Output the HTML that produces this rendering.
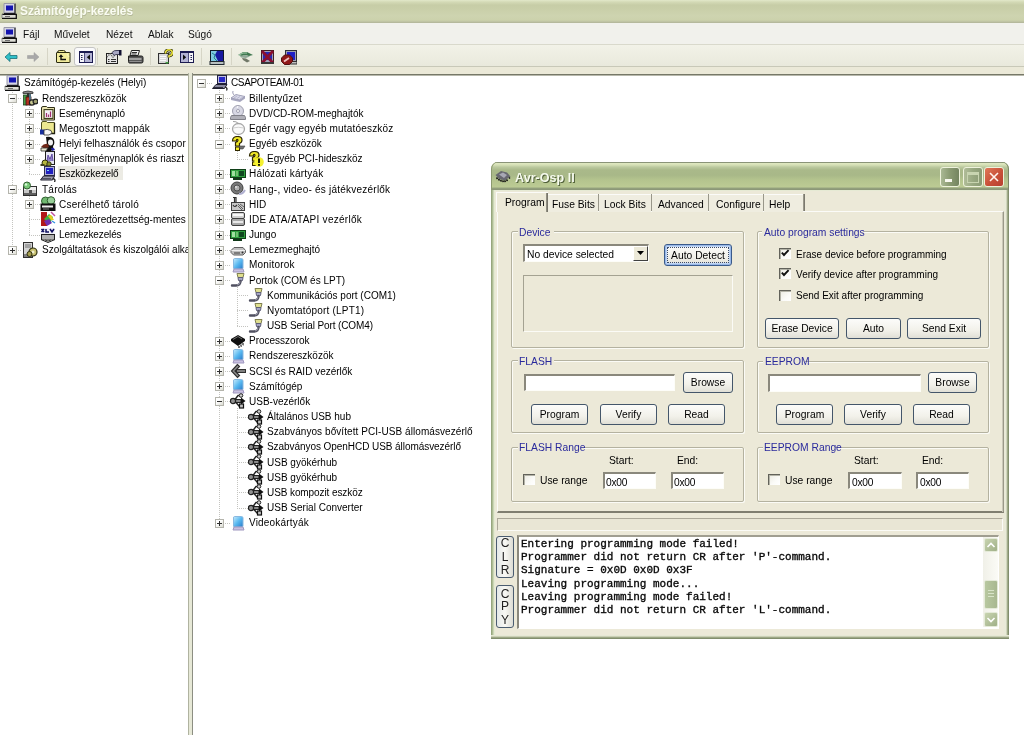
<!DOCTYPE html><html><head><meta charset="utf-8"><style>
html,body{margin:0;padding:0;width:1024px;height:735px;overflow:hidden;background:#fff;position:relative}
.t{position:absolute;white-space:nowrap;line-height:1;will-change:transform}
.exp{position:absolute;width:7px;height:7px;border:1px solid #b4b4ac;background:linear-gradient(135deg,#fff 35%,#dcdcd2)}
.exp .mh{position:absolute;left:1px;top:3px;width:5px;height:1px;background:#303030}
.exp .mv{position:absolute;left:3px;top:1px;width:1px;height:5px;background:#303030}
.hd{position:absolute;height:1px;background:repeating-linear-gradient(90deg,#c4c4c0 0 1px,transparent 1px 2px)}
.vd{position:absolute;width:1px;background:repeating-linear-gradient(#c4c4c0 0 1px,transparent 1px 2px)}
svg{position:absolute}
</style></head><body>
<div style="position:absolute;left:0px;top:0px;width:1024px;height:23px;background:linear-gradient(#e2e8ca 0px,#d4dab6 2px,#c7cda7 5px,#c9cfa9 9px,#ced4b0 16px,#ccd2ac 20px,#bcc0a2 22px,#aeb296 23px)"></div>
<svg style="position:absolute;left:1px;top:3px" width="16" height="16" viewBox="0 0 16 16"><rect x="3" y="0.5" width="11" height="10" fill="#d4d4e4"/><path d="M14 0.5 V10.5 H3" stroke="#202028" stroke-width="1.3" fill="none"/><path d="M3 10 V0.5 H14" stroke="#9898a8" fill="none"/><rect x="5" y="2.5" width="7" height="5" fill="#1414b0"/><path d="M1 11 H15 V15 H1z" fill="#dcdcd4"/><path d="M1 11.3 H15.3 V15.3 H1" stroke="#101010" stroke-width="1.3" fill="none"/><path d="M1 11 V15" stroke="#909090"/><rect x="4" y="13" width="5" height="1" fill="#707070"/></svg>
<div class="t" style="left:20.30px;top:6.13px;font-size:11.9px;color:#fafcf2;font-weight:bold;font-family:'Liberation Sans', sans-serif;text-shadow:0.5px 0.5px 0 #b4b898">Számítógép-kezelés</div>
<div style="position:absolute;left:0px;top:23px;width:1024px;height:21px;background:#f1f1ec"></div>
<div style="position:absolute;left:0px;top:44px;width:1024px;height:1px;background:#d9d9cc"></div>
<svg style="position:absolute;left:1px;top:27px" width="16" height="16" viewBox="0 0 16 16"><rect x="3" y="0.5" width="11" height="10" fill="#d4d4e4"/><path d="M14 0.5 V10.5 H3" stroke="#202028" stroke-width="1.3" fill="none"/><path d="M3 10 V0.5 H14" stroke="#9898a8" fill="none"/><rect x="5" y="2.5" width="7" height="5" fill="#1414b0"/><path d="M1 11 H15 V15 H1z" fill="#dcdcd4"/><path d="M1 11.3 H15.3 V15.3 H1" stroke="#101010" stroke-width="1.3" fill="none"/><path d="M1 11 V15" stroke="#909090"/><rect x="4" y="13" width="5" height="1" fill="#707070"/></svg>
<div class="t" style="left:23.40px;top:30.17px;font-size:10.2px;color:#111;font-weight:normal;font-family:'Liberation Sans', sans-serif;">Fájl</div>
<div class="t" style="left:54.00px;top:30.17px;font-size:10.2px;color:#111;font-weight:normal;font-family:'Liberation Sans', sans-serif;">Művelet</div>
<div class="t" style="left:105.50px;top:30.17px;font-size:10.2px;color:#111;font-weight:normal;font-family:'Liberation Sans', sans-serif;">Nézet</div>
<div class="t" style="left:147.70px;top:30.17px;font-size:10.2px;color:#111;font-weight:normal;font-family:'Liberation Sans', sans-serif;">Ablak</div>
<div class="t" style="left:187.50px;top:30.17px;font-size:10.2px;color:#111;font-weight:normal;font-family:'Liberation Sans', sans-serif;">Súgó</div>
<div style="position:absolute;left:0px;top:45px;width:1024px;height:21px;background:linear-gradient(#f2f2e8,#e9e9dc)"></div>
<div style="position:absolute;left:0px;top:66px;width:1024px;height:1px;background:#c8c8b8"></div>
<div style="position:absolute;left:0px;top:67px;width:1024px;height:7px;background:#ebe9d8"></div>
<div style="position:absolute;left:47px;top:48px;width:1px;height:17px;background:#d6d5c6"></div>
<div style="position:absolute;left:97px;top:48px;width:1px;height:17px;background:#d6d5c6"></div>
<div style="position:absolute;left:150px;top:48px;width:1px;height:17px;background:#d6d5c6"></div>
<div style="position:absolute;left:201px;top:48px;width:1px;height:17px;background:#d6d5c6"></div>
<div style="position:absolute;left:231px;top:48px;width:1px;height:17px;background:#d6d5c6"></div>
<svg style="position:absolute;left:4px;top:51px" width="14" height="12" viewBox="0 0 14 12"><path d="M1 6 L6 1.5 V4.5 H13 V7.5 H6 V10.5 Z" fill="#30c0c8" stroke="#1a7078" stroke-width="0.8"/></svg>
<svg style="position:absolute;left:27px;top:51px" width="13" height="12" viewBox="0 0 13 12"><path d="M12 6 L7 1.5 V4.5 H0.5 V7.5 H7 V10.5 Z" fill="#a8a8a8" stroke="#9a9a9a" stroke-width="0.5"/></svg>
<svg style="position:absolute;left:55px;top:49px" width="16" height="15" viewBox="0 0 16 15"><path d="M2.5 3.5 q0-2 2-2 h4 q2 0 2 2" fill="#f0ea98" stroke="#303010"/><rect x="1.5" y="3.5" width="13.5" height="10" rx="0.5" fill="#f2ec9c" stroke="#2a2a10"/><path d="M12 5 l2 3" stroke="#f8f8c0"/><path d="M6 5.2 L3.6 8 H8.4z" fill="#101010"/><path d="M6 7.5 V10.5 H11" stroke="#101010" stroke-width="1.4" fill="none"/></svg>
<div style="position:absolute;left:74px;top:47px;width:22px;height:19px;background:#fafafc;border:1px solid #c4c4c4;border-radius:3px;box-sizing:border-box"></div>
<svg style="position:absolute;left:79px;top:51px" width="14" height="12" viewBox="0 0 14 12"><rect x="0.5" y="0.5" width="13" height="11" fill="#b4b4d4" stroke="#1a1a50"/><rect x="0" y="0" width="14" height="2" fill="#1a1a50"/><rect x="1" y="2" width="4" height="9" fill="#f4f4f8"/><rect x="5" y="2" width="1" height="9" fill="#505080"/><rect x="2" y="4" width="1.5" height="1" fill="#202050"/><rect x="2" y="6" width="1.5" height="1" fill="#202050"/><rect x="2" y="8" width="1.5" height="1" fill="#202050"/><path d="M11 3.5 V9 L7.8 6.2z" fill="#101010"/></svg>
<svg style="position:absolute;left:105px;top:49px" width="17" height="16" viewBox="0 0 17 16"><rect x="1.5" y="4.5" width="11" height="10" fill="#e4e4e4" stroke="#202020"/><path d="M2 8 L5 5 L8 8 L11 5" stroke="#606060" stroke-width="1.5" stroke-dasharray="1 1" fill="none"/><path d="M3 10.5h1.5M6 10.5h5M3 12.5h1.5M6 12.5h5" stroke="#303030"/><path d="M7 3.5 Q9 1 12 1.5 H15 V5.5 H12 Q10 5.5 9 6.5z" fill="#a8a8c4" stroke="#404058"/><rect x="14" y="1" width="2.5" height="5.5" fill="#101030"/></svg>
<svg style="position:absolute;left:127px;top:49px" width="17" height="16" viewBox="0 0 17 16"><path d="M4.5 1.5 h8 l-1.5 5 h-8z" fill="#f4f4f4" stroke="#202020"/><path d="M5 3.5h5M4.5 5h5" stroke="#303030"/><path d="M1.5 7 h13 q1.5 0 1.5 1.5 v4 q0 1.5-1.5 1.5 h-12 q-1 0-1-1.5z" fill="#585858" stroke="#202020"/><path d="M2 10 h12.5" stroke="#c0c0c0" stroke-width="1.4"/><path d="M2.5 12.5 h12" stroke="#909090"/></svg>
<svg style="position:absolute;left:157px;top:49px" width="16" height="16" viewBox="0 0 16 16"><rect x="1.5" y="4.5" width="10" height="10" fill="#d8d8d8" stroke="#303030"/><path d="M3 7.5h6M3 9.5h6M3 11.5h6" stroke="#f8f8f8" stroke-width="1.2"/><path d="M8 13 l4 0 -2 2z" fill="#40a040"/><path d="M8.5 4.5 Q8.5 0.8 12 0.8 Q15.3 0.8 15.3 3.8 Q15.3 6.5 12 7 V8.5" stroke="#303010" stroke-width="3" fill="none"/><path d="M8.5 4.5 Q8.5 0.8 12 0.8 Q15.3 0.8 15.3 3.8 Q15.3 6.5 12 7 V8.5" stroke="#e8e040" stroke-width="1.6" fill="none"/><circle cx="12" cy="3.8" r="0.9" fill="#303010"/></svg>
<svg style="position:absolute;left:180px;top:51px" width="14" height="12" viewBox="0 0 14 12"><rect x="0.5" y="0.5" width="13" height="11" fill="#b4b4d4" stroke="#1a1a50"/><rect x="0" y="0" width="14" height="2" fill="#1a1a50"/><rect x="9" y="2" width="4" height="9" fill="#f4f4f8"/><rect x="8" y="2" width="1" height="9" fill="#505080"/><rect x="10.5" y="4" width="1.5" height="1" fill="#202050"/><rect x="10.5" y="6" width="1.5" height="1" fill="#202050"/><rect x="10.5" y="8" width="1.5" height="1" fill="#202050"/><path d="M3 3.5 V9 L6.2 6.2z" fill="#101010"/></svg>
<svg style="position:absolute;left:209px;top:49px" width="16" height="16" viewBox="0 0 16 16"><rect x="1.5" y="1.5" width="13" height="11" fill="#1818a0" stroke="#101828"/><path d="M2 2 h6 l-2 4 l3 6 h-7z" fill="#80c8e0"/><path d="M3 4 l3 2 -1 3 3 3" stroke="#208090" fill="none"/><rect x="1" y="12.5" width="14" height="3" fill="#b8c0c0" stroke="#202830"/></svg>
<svg style="position:absolute;left:237px;top:50px" width="17" height="14" viewBox="0 0 17 14"><path d="M1 5 L6 2 H10 L16 5 L12 6 L8 5 L5 6z" fill="#407850"/><path d="M3 6 L8 5 L13 6.5 L9 8 L4 7.5z" fill="#90a898"/><path d="M5 8 L9 8.5 L13 11 L10 12.5 L6 10z" fill="#707868"/><path d="M2 5 L6 3 H10" stroke="#a8d0b0" fill="none"/></svg>
<svg style="position:absolute;left:260px;top:49px" width="15" height="16" viewBox="0 0 15 16"><rect x="1.5" y="1.5" width="12" height="12" fill="#a0a0b8" stroke="#402020"/><rect x="3" y="3" width="9" height="8" fill="#2828b0"/><path d="M2 2 L13 14 M13 2 L2 14" stroke="#8a1030" stroke-width="2.6"/><rect x="1" y="13" width="13" height="2" fill="#383838"/></svg>
<svg style="position:absolute;left:281px;top:49px" width="16" height="16" viewBox="0 0 16 16"><rect x="4.5" y="1.5" width="11" height="11" fill="#a0a0b0" stroke="#303038"/><rect x="6" y="3" width="8" height="8" fill="#2020c8"/><rect x="4" y="12.5" width="12" height="2.5" fill="#c0c0c0" stroke="#303030"/><path d="M3.5 6 h5 l3 3 v3.5 l-3 3 h-5 l-3-3 v-3.5z" fill="#901818" stroke="#501010"/><path d="M3 12.5 L8 9" stroke="#f0c0c0" stroke-width="1.8"/></svg>
<div style="position:absolute;left:0px;top:74px;width:188px;height:1px;background:#767868"></div>
<div style="position:absolute;left:0px;top:75px;width:188px;height:1px;background:#b8b9ac"></div>
<div style="position:absolute;left:188px;top:73px;width:1px;height:662px;background:#b0b3a0"></div>
<div style="position:absolute;left:189px;top:73px;width:3px;height:662px;background:#e6e8d6"></div>
<div style="position:absolute;left:192px;top:73px;width:1px;height:662px;background:#8c8e82"></div>
<div style="position:absolute;left:193px;top:74px;width:831px;height:1px;background:#767868"></div>
<div style="position:absolute;left:193px;top:75px;width:831px;height:1px;background:#b8b9ac"></div>
<div style="position:absolute;left:58px;top:166px;width:65px;height:14px;background:#ecebe4"></div>
<div style="position:absolute;left:0px;top:74px;width:188px;height:661px;overflow:hidden">
<div class="hd" style="left:12px;top:24px;width:10px"></div>
<div class="vd" style="left:12px;top:16px;height:8px"></div>
<div class="hd" style="left:29px;top:39px;width:11px"></div>
<div class="vd" style="left:29px;top:31px;height:8px"></div>
<div class="hd" style="left:29px;top:54px;width:11px"></div>
<div class="vd" style="left:29px;top:31px;height:23px"></div>
<div class="hd" style="left:29px;top:70px;width:11px"></div>
<div class="vd" style="left:29px;top:31px;height:39px"></div>
<div class="hd" style="left:29px;top:85px;width:11px"></div>
<div class="vd" style="left:29px;top:31px;height:54px"></div>
<div class="hd" style="left:29px;top:100px;width:11px"></div>
<div class="vd" style="left:29px;top:31px;height:69px"></div>
<div class="hd" style="left:12px;top:115px;width:10px"></div>
<div class="vd" style="left:12px;top:16px;height:99px"></div>
<div class="hd" style="left:29px;top:130px;width:11px"></div>
<div class="vd" style="left:29px;top:122px;height:8px"></div>
<div class="hd" style="left:29px;top:145px;width:11px"></div>
<div class="vd" style="left:29px;top:122px;height:23px"></div>
<div class="hd" style="left:29px;top:161px;width:11px"></div>
<div class="vd" style="left:29px;top:122px;height:39px"></div>
<div class="hd" style="left:12px;top:176px;width:10px"></div>
<div class="vd" style="left:12px;top:16px;height:160px"></div>
<svg style="position:absolute;left:4px;top:1px" width="16" height="16" viewBox="0 0 16 16"><rect x="3" y="0.5" width="11" height="10" fill="#d4d4e4"/><path d="M14 0.5 V10.5 H3" stroke="#202028" stroke-width="1.3" fill="none"/><path d="M3 10 V0.5 H14" stroke="#9898a8" fill="none"/><rect x="5" y="2.5" width="7" height="5" fill="#1414b0"/><path d="M1 11 H15 V15 H1z" fill="#dcdcd4"/><path d="M1 11.3 H15.3 V15.3 H1" stroke="#101010" stroke-width="1.3" fill="none"/><path d="M1 11 V15" stroke="#909090"/><rect x="4" y="13" width="5" height="1" fill="#707070"/></svg>
<div class="t" style="left:23.50px;top:4.33px;font-size:10px;color:#000;font-weight:normal;font-family:'Liberation Sans', sans-serif;">Számítógép-kezelés (Helyi)</div>
<div class="exp" style="left:8px;top:20px"><div class="mh"></div></div>
<svg style="position:absolute;left:22px;top:16px" width="16" height="16" viewBox="0 0 16 16"><path d="M1 2 Q6 0 11 2 V3.5 H1z" fill="#8a8a8a" stroke="#303030" stroke-width="0.8"/><rect x="5" y="3" width="2" height="6" fill="#303030"/><rect x="1.5" y="5" width="3.5" height="10" fill="#48a048" stroke="#204020" stroke-width="0.8"/><rect x="4" y="7" width="5" height="8" fill="#b83020" stroke="#401010" stroke-width="0.8"/><rect x="7" y="4" width="2" height="6" fill="#507080"/><circle cx="10" cy="12.5" r="2.6" fill="#c8c890" stroke="#202020" stroke-width="1.2"/><circle cx="13.5" cy="11.5" r="2.4" fill="#a0a070" stroke="#202020" stroke-width="1.2"/></svg>
<div class="t" style="left:41.50px;top:19.50px;font-size:10px;color:#000;font-weight:normal;font-family:'Liberation Sans', sans-serif;">Rendszereszközök</div>
<div class="exp" style="left:25px;top:35px"><div class="mh"></div><div class="mv"></div></div>
<svg style="position:absolute;left:40px;top:31px" width="16" height="16" viewBox="0 0 16 16"><path d="M1.5 3 Q1.5 1.5 3 1.5 H6.5 L7.5 2.5 H14.5 V15 H1.5z" fill="#e8e2b0" stroke="#303018"/><rect x="4" y="4.5" width="9" height="9" fill="#c8c0a0" stroke="#404020"/><rect x="5" y="5.5" width="7" height="7" fill="#f4f0f8"/><path d="M6.5 12 V8 M8.5 12 V9.5 M10.5 12 V6.5" stroke="#a03070" stroke-width="1.2"/></svg>
<div class="t" style="left:59.20px;top:34.67px;font-size:10px;color:#000;font-weight:normal;font-family:'Liberation Sans', sans-serif;">Eseménynapló</div>
<div class="exp" style="left:25px;top:50px"><div class="mh"></div><div class="mv"></div></div>
<svg style="position:absolute;left:40px;top:46px" width="16" height="16" viewBox="0 0 16 16"><path d="M1.5 3 Q1.5 1.5 3 1.5 H6.5 L7.5 2.5 H14.5 V13.5 H1.5z" fill="#ece890" stroke="#505020"/><path d="M14.5 3 V13.5 H3" stroke="#202010" stroke-width="1.3" fill="none"/><rect x="0" y="9.5" width="4.5" height="5" fill="#1830a0"/><path d="M4 10 Q7 8.5 11 10.5 L12 13 L9 15 H4z" fill="#f8f8f8" stroke="#303030" stroke-width="0.8"/></svg>
<div class="t" style="left:59.20px;top:49.84px;font-size:10px;color:#000;font-weight:normal;font-family:'Liberation Sans', sans-serif;letter-spacing:0.219px">Megosztott mappák</div>
<div class="exp" style="left:25px;top:66px"><div class="mh"></div><div class="mv"></div></div>
<svg style="position:absolute;left:40px;top:62px" width="16" height="16" viewBox="0 0 16 16"><path d="M6 1 Q12 0 14 4 Q15 8 13 10 Q14 13 11 15 H5 Q8 12 7 9z" fill="#101010"/><ellipse cx="10.5" cy="6.5" rx="2.5" ry="3" fill="#f0f0f0"/><path d="M1 11 Q4 7 8 8 L9 11 L6 13z" fill="#702818"/><path d="M1 12 L8 12 L6 15 H1z" fill="#e8e8d0" stroke="#303030" stroke-width="0.8"/><path d="M11 12 Q14 11 15 14 L12 15z" fill="#2020a0"/></svg>
<div class="t" style="left:59.20px;top:65.01px;font-size:10px;color:#000;font-weight:normal;font-family:'Liberation Sans', sans-serif;">Helyi felhasználók és csopor</div>
<div class="exp" style="left:25px;top:81px"><div class="mh"></div><div class="mv"></div></div>
<svg style="position:absolute;left:40px;top:77px" width="16" height="16" viewBox="0 0 16 16"><rect x="5.5" y="0.5" width="9" height="13" fill="#e8e8f4" stroke="#202020"/><path d="M7 10 L8 4 L10 8 L12 3 L13 10" fill="#9080c8" stroke="#503898" stroke-width="0.8"/><circle cx="5" cy="12" r="3" fill="#b8b840" stroke="#303010"/><circle cx="9" cy="13" r="2.2" fill="#889030" stroke="#303010"/><rect x="0.5" y="13" width="4" height="2" fill="#404020"/></svg>
<div class="t" style="left:59.20px;top:80.18px;font-size:10px;color:#000;font-weight:normal;font-family:'Liberation Sans', sans-serif;">Teljesítménynaplók és riaszt</div>
<svg style="position:absolute;left:40px;top:92px" width="16" height="16" viewBox="0 0 16 16"><rect x="4.5" y="0.5" width="10" height="9" fill="#b0b0d8" stroke="#303050"/><rect x="6" y="2" width="7" height="6" fill="#2020c0"/><rect x="7" y="4" width="2" height="1" fill="#80d0f0"/><path d="M0.5 14 L3.5 10 H14.5 L12.5 14 Z" fill="#9898a8" stroke="#202030"/><path d="M2 12.5 h9" stroke="#505060"/><path d="M12.5 12.5 q3.5 0.5 2 3.5" stroke="#202020" stroke-width="1.3" fill="none"/></svg>
<div class="t" style="left:59.20px;top:95.35px;font-size:10px;color:#000;font-weight:normal;font-family:'Liberation Sans', sans-serif;letter-spacing:-0.145px">Eszközkezelő</div>
<div class="exp" style="left:8px;top:111px"><div class="mh"></div></div>
<svg style="position:absolute;left:22px;top:107px" width="16" height="16" viewBox="0 0 16 16"><rect x="1.5" y="5.5" width="13" height="9" fill="#c8c8c8" stroke="#303030"/><rect x="2" y="6" width="12" height="3" fill="#f0f0f0"/><rect x="2" y="12" width="12" height="2" fill="#606060"/><rect x="7" y="9" width="3" height="3" fill="#505050"/><circle cx="5" cy="4.5" r="3.5" fill="#78c878" stroke="#306030"/><circle cx="4" cy="3.5" r="1.2" fill="#d8f8d8"/></svg>
<div class="t" style="left:41.50px;top:110.53px;font-size:10px;color:#000;font-weight:normal;font-family:'Liberation Sans', sans-serif;letter-spacing:0.233px">Tárolás</div>
<div class="exp" style="left:25px;top:126px"><div class="mh"></div><div class="mv"></div></div>
<svg style="position:absolute;left:40px;top:122px" width="16" height="16" viewBox="0 0 16 16"><circle cx="5.5" cy="5" r="4" fill="#70b870" stroke="#306030"/><circle cx="11" cy="4.5" r="3.8" fill="#98d098" stroke="#306030"/><rect x="0.5" y="7.5" width="15" height="7.5" fill="#101010"/><rect x="2" y="9.5" width="11" height="2" fill="#f0f0f0"/><rect x="3" y="12.5" width="6" height="1" fill="#808080"/></svg>
<div class="t" style="left:59.20px;top:125.69px;font-size:10px;color:#000;font-weight:normal;font-family:'Liberation Sans', sans-serif;letter-spacing:0.225px">Cserélhető tároló</div>
<svg style="position:absolute;left:40px;top:137px" width="16" height="16" viewBox="0 0 16 16"><rect x="1" y="1" width="6" height="14" fill="#b01818"/><path d="M4 8 L9 3 L13 6 L10 13z" fill="#40b040"/><path d="M4 10 L9 8 L12 12 L7 15z" fill="#7030b0"/><path d="M8 5 L11 4 L14 9 L11 9z" fill="#e8d020"/><path d="M11 1 L15 5" stroke="#c050a0" stroke-width="1.4"/><path d="M12 10 L15 12" stroke="#3090e0" stroke-width="1.4"/></svg>
<div class="t" style="left:59.20px;top:140.86px;font-size:10px;color:#000;font-weight:normal;font-family:'Liberation Sans', sans-serif;">Lemeztöredezettség-mentes</div>
<svg style="position:absolute;left:40px;top:153px" width="16" height="16" viewBox="0 0 16 16"><path d="M1 1 h14 v6 h-14z" fill="#f0f0f8"/><path d="M1.5 2 L4 5 M4 2 L1.5 5 M6 2 v3 h3 M10 2 L12 5 L14 2" stroke="#101060" stroke-width="1.5" fill="none"/><rect x="1.5" y="7.5" width="13" height="5" fill="#b0b0b0" stroke="#202020"/><path d="M1 12.5 L8 15.5 L15 12.5" fill="#e0e0d8" stroke="#202020"/><path d="M5 13 L8 14 L11 13" stroke="#404040" fill="none"/></svg>
<div class="t" style="left:59.20px;top:156.03px;font-size:10px;color:#000;font-weight:normal;font-family:'Liberation Sans', sans-serif;letter-spacing:-0.118px">Lemezkezelés</div>
<div class="exp" style="left:8px;top:172px"><div class="mh"></div><div class="mv"></div></div>
<svg style="position:absolute;left:22px;top:168px" width="16" height="16" viewBox="0 0 16 16"><rect x="1.5" y="0.5" width="9" height="15" fill="#d4d4d4" stroke="#303030"/><path d="M3 3h6M3 5h6" stroke="#707070"/><rect x="2" y="12" width="8" height="3" fill="#808080"/><circle cx="11" cy="10" r="4" fill="#c8c070" stroke="#303010" stroke-width="1.2"/><circle cx="11" cy="10" r="1.5" fill="#f0f0d0"/><circle cx="7.5" cy="12" r="2.5" fill="#a8a050" stroke="#303010"/></svg>
<div class="t" style="left:41.50px;top:171.21px;font-size:10px;color:#000;font-weight:normal;font-family:'Liberation Sans', sans-serif;">Szolgáltatások és kiszolgálói alka</div>
</div>
<div style="position:absolute;left:193px;top:74px;width:831px;height:661px;overflow:hidden">
<div class="hd" style="left:8px;top:9px;width:11px"></div>
<div class="hd" style="left:26px;top:24px;width:11px"></div>
<div class="vd" style="left:26px;top:16px;height:8px"></div>
<div class="hd" style="left:26px;top:39px;width:11px"></div>
<div class="vd" style="left:26px;top:16px;height:23px"></div>
<div class="hd" style="left:26px;top:54px;width:11px"></div>
<div class="vd" style="left:26px;top:16px;height:38px"></div>
<div class="hd" style="left:26px;top:70px;width:11px"></div>
<div class="vd" style="left:26px;top:16px;height:54px"></div>
<div class="hd" style="left:44px;top:85px;width:11px"></div>
<div class="vd" style="left:44px;top:77px;height:8px"></div>
<div class="hd" style="left:26px;top:100px;width:11px"></div>
<div class="vd" style="left:26px;top:16px;height:84px"></div>
<div class="hd" style="left:26px;top:115px;width:11px"></div>
<div class="vd" style="left:26px;top:16px;height:99px"></div>
<div class="hd" style="left:26px;top:130px;width:11px"></div>
<div class="vd" style="left:26px;top:16px;height:114px"></div>
<div class="hd" style="left:26px;top:145px;width:11px"></div>
<div class="vd" style="left:26px;top:16px;height:129px"></div>
<div class="hd" style="left:26px;top:161px;width:11px"></div>
<div class="vd" style="left:26px;top:16px;height:145px"></div>
<div class="hd" style="left:26px;top:176px;width:11px"></div>
<div class="vd" style="left:26px;top:16px;height:160px"></div>
<div class="hd" style="left:26px;top:191px;width:11px"></div>
<div class="vd" style="left:26px;top:16px;height:175px"></div>
<div class="hd" style="left:26px;top:206px;width:11px"></div>
<div class="vd" style="left:26px;top:16px;height:190px"></div>
<div class="hd" style="left:44px;top:221px;width:11px"></div>
<div class="vd" style="left:44px;top:213px;height:8px"></div>
<div class="hd" style="left:44px;top:236px;width:11px"></div>
<div class="vd" style="left:44px;top:213px;height:23px"></div>
<div class="hd" style="left:44px;top:252px;width:11px"></div>
<div class="vd" style="left:44px;top:213px;height:39px"></div>
<div class="hd" style="left:26px;top:267px;width:11px"></div>
<div class="vd" style="left:26px;top:16px;height:251px"></div>
<div class="hd" style="left:26px;top:282px;width:11px"></div>
<div class="vd" style="left:26px;top:16px;height:266px"></div>
<div class="hd" style="left:26px;top:297px;width:11px"></div>
<div class="vd" style="left:26px;top:16px;height:281px"></div>
<div class="hd" style="left:26px;top:312px;width:11px"></div>
<div class="vd" style="left:26px;top:16px;height:296px"></div>
<div class="hd" style="left:26px;top:327px;width:11px"></div>
<div class="vd" style="left:26px;top:16px;height:311px"></div>
<div class="hd" style="left:44px;top:343px;width:11px"></div>
<div class="vd" style="left:44px;top:334px;height:9px"></div>
<div class="hd" style="left:44px;top:358px;width:11px"></div>
<div class="vd" style="left:44px;top:334px;height:24px"></div>
<div class="hd" style="left:44px;top:373px;width:11px"></div>
<div class="vd" style="left:44px;top:334px;height:39px"></div>
<div class="hd" style="left:44px;top:388px;width:11px"></div>
<div class="vd" style="left:44px;top:334px;height:54px"></div>
<div class="hd" style="left:44px;top:403px;width:11px"></div>
<div class="vd" style="left:44px;top:334px;height:69px"></div>
<div class="hd" style="left:44px;top:418px;width:11px"></div>
<div class="vd" style="left:44px;top:334px;height:84px"></div>
<div class="hd" style="left:44px;top:434px;width:11px"></div>
<div class="vd" style="left:44px;top:334px;height:100px"></div>
<div class="hd" style="left:26px;top:449px;width:11px"></div>
<div class="vd" style="left:26px;top:16px;height:433px"></div>
<div class="exp" style="left:4px;top:5px"><div class="mh"></div></div>
<svg style="position:absolute;left:19px;top:1px" width="16" height="16" viewBox="0 0 16 16"><rect x="5.5" y="0.5" width="9" height="8" fill="#c0c0e0" stroke="#202040"/><rect x="7" y="2" width="6" height="5" fill="#2828c8"/><path d="M0.5 13.5 L4 9.5 H15 L12.5 13.5 Z" fill="#8a8aa0" stroke="#202030"/><path d="M2 12.5 h9" stroke="#303040"/><path d="M13 12 q3 1 1.5 3.5" stroke="#202020" stroke-width="1.3" fill="none"/></svg>
<div class="t" style="left:38.00px;top:4.33px;font-size:10px;color:#000;font-weight:normal;font-family:'Liberation Sans', sans-serif;letter-spacing:-0.382px">CSAPOTEAM-01</div>
<div class="exp" style="left:22px;top:20px"><div class="mh"></div><div class="mv"></div></div>
<svg style="position:absolute;left:37px;top:16px" width="16" height="16" viewBox="0 0 16 16"><path d="M1 8 L6 4.5 L15 6.5 L15 8.5 L10 12 L1 10z" fill="#a8a8c0"/><path d="M1 8 L6 4.5 L15 6.5 L10 10z" fill="#d8d8e8" stroke="#9898b0" stroke-width="0.8"/><path d="M4 8 L7 6 M7 8.5 L10 6.5 M10 9 L13 7" stroke="#b8b8d0"/><path d="M4 5 Q2 3 3 1" stroke="#a0a0b8" fill="none"/></svg>
<div class="t" style="left:56.00px;top:19.50px;font-size:10px;color:#000;font-weight:normal;font-family:'Liberation Sans', sans-serif;letter-spacing:0.155px">Billentyűzet</div>
<div class="exp" style="left:22px;top:35px"><div class="mh"></div><div class="mv"></div></div>
<svg style="position:absolute;left:37px;top:31px" width="16" height="16" viewBox="0 0 16 16"><circle cx="8" cy="6" r="5.5" fill="#d8d8e4" stroke="#a0a0b0"/><circle cx="8" cy="6" r="1.5" fill="#fff" stroke="#a0a0b0"/><path d="M7 3 l1-2" stroke="#fff"/><path d="M1.5 10.5 h13 l1 2 v2 h-15 v-2z" fill="#b0b0b8" stroke="#808088"/></svg>
<div class="t" style="left:56.00px;top:34.67px;font-size:10px;color:#000;font-weight:normal;font-family:'Liberation Sans', sans-serif;">DVD/CD-ROM-meghajtók</div>
<div class="exp" style="left:22px;top:50px"><div class="mh"></div><div class="mv"></div></div>
<svg style="position:absolute;left:37px;top:46px" width="16" height="16" viewBox="0 0 16 16"><ellipse cx="8.5" cy="9" rx="6" ry="5.5" fill="#fafafa" stroke="#a8a8a8" stroke-width="1.3"/><path d="M3 8 Q8 6.5 14 8" stroke="#d0d0d0" fill="none"/><path d="M8.5 3.5 Q6 1 3 1.5" stroke="#a0a0a0" fill="none"/></svg>
<div class="t" style="left:56.00px;top:49.84px;font-size:10px;color:#000;font-weight:normal;font-family:'Liberation Sans', sans-serif;letter-spacing:0.174px">Egér vagy egyéb mutatóeszköz</div>
<div class="exp" style="left:22px;top:66px"><div class="mh"></div></div>
<svg style="position:absolute;left:37px;top:62px" width="16" height="16" viewBox="0 0 16 16"><path d="M2.5 5 Q2.5 0.5 7.5 0.5 Q12 0.5 12 4 Q12 6.5 9.5 7.5 V10 H5.5 V6.5 Q8 5.8 8 4.3 Q8 3.3 7.2 3.3 Q6.3 3.3 6.3 5z" fill="#f0e828" stroke="#302800" stroke-width="1.2"/><rect x="5.5" y="11" width="4" height="3.5" fill="#f0e828" stroke="#302800"/><path d="M9 10 L15 10 L13 13 H10z" fill="#707070" stroke="#404040" stroke-width="0.6"/></svg>
<div class="t" style="left:56.00px;top:65.01px;font-size:10px;color:#000;font-weight:normal;font-family:'Liberation Sans', sans-serif;">Egyéb eszközök</div>
<svg style="position:absolute;left:55px;top:77px" width="16" height="16" viewBox="0 0 16 16"><path d="M1.5 5 Q1.5 0.5 6.5 0.5 Q11 0.5 11 4 Q11 6.5 8.5 7.5 V10 H4.5 V6.5 Q7 5.8 7 4.3 Q7 3.3 6.2 3.3 Q5.3 3.3 5.3 5z" fill="#f0e828" stroke="#302800" stroke-width="1.2"/><rect x="4.5" y="11" width="4" height="3.5" fill="#f0e828" stroke="#302800"/><circle cx="11" cy="11" r="4.8" fill="#f4f030"/><rect x="10" y="7.5" width="2" height="4.5" fill="#202000"/><rect x="10" y="13" width="2" height="1.8" fill="#202000"/></svg>
<div class="t" style="left:74.00px;top:80.18px;font-size:10px;color:#000;font-weight:normal;font-family:'Liberation Sans', sans-serif;">Egyéb PCI-hideszköz</div>
<div class="exp" style="left:22px;top:96px"><div class="mh"></div><div class="mv"></div></div>
<svg style="position:absolute;left:37px;top:92px" width="16" height="16" viewBox="0 0 16 16"><rect x="0.5" y="3.5" width="15" height="8" fill="#30a040" stroke="#104018"/><rect x="2" y="5" width="3" height="5" fill="#a0e0a0"/><rect x="6" y="5" width="2" height="5" fill="#70c070"/><rect x="9" y="5" width="5" height="5" fill="#104820"/><rect x="3" y="11.5" width="9" height="2.5" fill="#103818"/></svg>
<div class="t" style="left:56.00px;top:95.35px;font-size:10px;color:#000;font-weight:normal;font-family:'Liberation Sans', sans-serif;letter-spacing:0.200px">Hálózati kártyák</div>
<div class="exp" style="left:22px;top:111px"><div class="mh"></div><div class="mv"></div></div>
<svg style="position:absolute;left:37px;top:107px" width="16" height="16" viewBox="0 0 16 16"><circle cx="7" cy="7" r="6" fill="#787878" stroke="#404040"/><circle cx="7" cy="7" r="3" fill="#b0b0b0" stroke="#505050"/><circle cx="6" cy="6" r="1" fill="#e0e0e0"/><path d="M9 13 q4 0 6-4" stroke="#b0b0d0" stroke-width="2" fill="none"/></svg>
<div class="t" style="left:56.00px;top:110.53px;font-size:10px;color:#000;font-weight:normal;font-family:'Liberation Sans', sans-serif;letter-spacing:0.228px">Hang-, video- és játékvezérlők</div>
<div class="exp" style="left:22px;top:126px"><div class="mh"></div><div class="mv"></div></div>
<svg style="position:absolute;left:37px;top:122px" width="16" height="16" viewBox="0 0 16 16"><rect x="1.5" y="6.5" width="13" height="8" fill="#c8c8c8" stroke="#404040"/><path d="M3 1.5 h3 v5 M4.5 1.5 v5" stroke="#303030" stroke-width="1.2" fill="none"/><path d="M8 8 L13 13 M10 8 L14 11 M8 10 L12 14" stroke="#606060"/><path d="M3 9 q1.5 3 4 0" stroke="#303030" fill="none" stroke-width="1.2"/></svg>
<div class="t" style="left:56.00px;top:125.69px;font-size:10px;color:#000;font-weight:normal;font-family:'Liberation Sans', sans-serif;">HID</div>
<div class="exp" style="left:22px;top:141px"><div class="mh"></div><div class="mv"></div></div>
<svg style="position:absolute;left:37px;top:137px" width="16" height="16" viewBox="0 0 16 16"><rect x="1.5" y="1.5" width="13" height="6" rx="1.5" fill="#d0d0d0" stroke="#404040"/><rect x="3" y="3" width="10" height="2" fill="#f8f8f8"/><rect x="1.5" y="7.5" width="13" height="7" rx="1.5" fill="#a8a8a8" stroke="#404040"/><rect x="3" y="10" width="10" height="2" fill="#e8e8e8"/></svg>
<div class="t" style="left:56.00px;top:140.86px;font-size:10px;color:#000;font-weight:normal;font-family:'Liberation Sans', sans-serif;letter-spacing:0.271px">IDE ATA/ATAPI vezérlők</div>
<div class="exp" style="left:22px;top:157px"><div class="mh"></div><div class="mv"></div></div>
<svg style="position:absolute;left:37px;top:153px" width="16" height="16" viewBox="0 0 16 16"><rect x="0.5" y="3.5" width="15" height="8" fill="#30a040" stroke="#104018"/><rect x="2" y="5" width="3" height="5" fill="#a0e0a0"/><rect x="6" y="5" width="2" height="5" fill="#70c070"/><rect x="9" y="5" width="5" height="5" fill="#104820"/><rect x="3" y="11.5" width="9" height="2.5" fill="#103818"/></svg>
<div class="t" style="left:56.00px;top:156.03px;font-size:10px;color:#000;font-weight:normal;font-family:'Liberation Sans', sans-serif;">Jungo</div>
<div class="exp" style="left:22px;top:172px"><div class="mh"></div><div class="mv"></div></div>
<svg style="position:absolute;left:37px;top:168px" width="16" height="16" viewBox="0 0 16 16"><path d="M1 8.5 L4 5.5 H13 L15.5 8.5 V10.5 L13 13 H3.5 L1 10.5z" fill="#c0c0c0" stroke="#606060"/><path d="M1.5 8.5 H15" stroke="#f0f0f0"/><path d="M4 11 h6" stroke="#505050" stroke-width="1.2"/><circle cx="12.5" cy="10.5" r="1" fill="#303030"/></svg>
<div class="t" style="left:56.00px;top:171.21px;font-size:10px;color:#000;font-weight:normal;font-family:'Liberation Sans', sans-serif;">Lemezmeghajtó</div>
<div class="exp" style="left:22px;top:187px"><div class="mh"></div><div class="mv"></div></div>
<svg style="position:absolute;left:37px;top:183px" width="16" height="16" viewBox="0 0 16 16"><defs><linearGradient id="mg" x1="0" y1="0" x2="1" y2="1"><stop offset="0" stop-color="#c8ecfc"/><stop offset="0.5" stop-color="#58b8f0"/><stop offset="1" stop-color="#2878c8"/></linearGradient></defs><path d="M4.5 1.5 h7 q1.5 0 1.5 1.5 v8 q0 1-1 1 h-7.5 q-1 0-1-1 v-8 q0-1.5 1-1.5z" fill="url(#mg)" stroke="#88b8e0"/><path d="M4 12 h9 l1 3 h-11z" fill="#c8c0e0" stroke="#a098c0"/></svg>
<div class="t" style="left:56.00px;top:186.37px;font-size:10px;color:#000;font-weight:normal;font-family:'Liberation Sans', sans-serif;letter-spacing:0.200px">Monitorok</div>
<div class="exp" style="left:22px;top:202px"><div class="mh"></div></div>
<svg style="position:absolute;left:37px;top:198px" width="16" height="16" viewBox="0 0 16 16"><path d="M7 1.5 h7 l-1 4 h-5z" fill="#e0e090" stroke="#808050"/><path d="M8 5.5 h5 l-0.5 3 q-2 1.5 -4 0z" fill="#a8a8c8" stroke="#606078"/><path d="M10.5 9 q0 4.5 -4.5 4.5 h-4" stroke="#505060" stroke-width="2.4" fill="none" stroke-linecap="round"/><path d="M10 9.5 q0 3 -3 3.5" stroke="#a0a0b0" fill="none"/></svg>
<div class="t" style="left:56.00px;top:201.54px;font-size:10px;color:#000;font-weight:normal;font-family:'Liberation Sans', sans-serif;">Portok (COM és LPT)</div>
<svg style="position:absolute;left:55px;top:213px" width="16" height="16" viewBox="0 0 16 16"><path d="M7 1.5 h7 l-1 4 h-5z" fill="#e0e090" stroke="#808050"/><path d="M8 5.5 h5 l-0.5 3 q-2 1.5 -4 0z" fill="#a8a8c8" stroke="#606078"/><path d="M10.5 9 q0 4.5 -4.5 4.5 h-4" stroke="#505060" stroke-width="2.4" fill="none" stroke-linecap="round"/><path d="M10 9.5 q0 3 -3 3.5" stroke="#a0a0b0" fill="none"/></svg>
<div class="t" style="left:74.00px;top:216.72px;font-size:10px;color:#000;font-weight:normal;font-family:'Liberation Sans', sans-serif;">Kommunikációs port (COM1)</div>
<svg style="position:absolute;left:55px;top:228px" width="16" height="16" viewBox="0 0 16 16"><path d="M7 1.5 h7 l-1 4 h-5z" fill="#e0e090" stroke="#808050"/><path d="M8 5.5 h5 l-0.5 3 q-2 1.5 -4 0z" fill="#a8a8c8" stroke="#606078"/><path d="M10.5 9 q0 4.5 -4.5 4.5 h-4" stroke="#505060" stroke-width="2.4" fill="none" stroke-linecap="round"/><path d="M10 9.5 q0 3 -3 3.5" stroke="#a0a0b0" fill="none"/></svg>
<div class="t" style="left:74.00px;top:231.89px;font-size:10px;color:#000;font-weight:normal;font-family:'Liberation Sans', sans-serif;letter-spacing:0.206px">Nyomtatóport (LPT1)</div>
<svg style="position:absolute;left:55px;top:244px" width="16" height="16" viewBox="0 0 16 16"><path d="M7 1.5 h7 l-1 4 h-5z" fill="#e0e090" stroke="#808050"/><path d="M8 5.5 h5 l-0.5 3 q-2 1.5 -4 0z" fill="#a8a8c8" stroke="#606078"/><path d="M10.5 9 q0 4.5 -4.5 4.5 h-4" stroke="#505060" stroke-width="2.4" fill="none" stroke-linecap="round"/><path d="M10 9.5 q0 3 -3 3.5" stroke="#a0a0b0" fill="none"/></svg>
<div class="t" style="left:74.00px;top:247.05px;font-size:10px;color:#000;font-weight:normal;font-family:'Liberation Sans', sans-serif;letter-spacing:-0.110px">USB Serial Port (COM4)</div>
<div class="exp" style="left:22px;top:263px"><div class="mh"></div><div class="mv"></div></div>
<svg style="position:absolute;left:37px;top:259px" width="16" height="16" viewBox="0 0 16 16"><path d="M1 6 L8 2 L15 6 L15 8 L8 13 L1 8z" fill="#101010"/><path d="M3 6.5 L8 3.5 L12 6" stroke="#707070" fill="none"/><path d="M9 13 v2 M11 11.5 v2.5 M13 10 v2.5" stroke="#202020" stroke-width="1.2"/><path d="M10 14 h1 M12 12.5 h1" stroke="#f0f0f0"/></svg>
<div class="t" style="left:56.00px;top:262.23px;font-size:10px;color:#000;font-weight:normal;font-family:'Liberation Sans', sans-serif;">Processzorok</div>
<div class="exp" style="left:22px;top:278px"><div class="mh"></div><div class="mv"></div></div>
<svg style="position:absolute;left:37px;top:274px" width="16" height="16" viewBox="0 0 16 16"><defs><linearGradient id="mg" x1="0" y1="0" x2="1" y2="1"><stop offset="0" stop-color="#c8ecfc"/><stop offset="0.5" stop-color="#58b8f0"/><stop offset="1" stop-color="#2878c8"/></linearGradient></defs><path d="M4.5 1.5 h7 q1.5 0 1.5 1.5 v8 q0 1-1 1 h-7.5 q-1 0-1-1 v-8 q0-1.5 1-1.5z" fill="url(#mg)" stroke="#88b8e0"/><path d="M4 12 h9 l1 3 h-11z" fill="#c8c0e0" stroke="#a098c0"/></svg>
<div class="t" style="left:56.00px;top:277.40px;font-size:10px;color:#000;font-weight:normal;font-family:'Liberation Sans', sans-serif;">Rendszereszközök</div>
<div class="exp" style="left:22px;top:293px"><div class="mh"></div><div class="mv"></div></div>
<svg style="position:absolute;left:37px;top:289px" width="16" height="16" viewBox="0 0 16 16"><path d="M7.5 1.5 L1.5 8 L7.5 14.5 L9.5 12.5 L5 8 L9.5 3.5z" fill="#909090" stroke="#303030" stroke-width="1.2"/><rect x="6.5" y="6.5" width="9" height="3" fill="#808080" stroke="#303030"/></svg>
<div class="t" style="left:56.00px;top:292.57px;font-size:10px;color:#000;font-weight:normal;font-family:'Liberation Sans', sans-serif;">SCSI és RAID vezérlők</div>
<div class="exp" style="left:22px;top:308px"><div class="mh"></div><div class="mv"></div></div>
<svg style="position:absolute;left:37px;top:304px" width="16" height="16" viewBox="0 0 16 16"><defs><linearGradient id="mg" x1="0" y1="0" x2="1" y2="1"><stop offset="0" stop-color="#c8ecfc"/><stop offset="0.5" stop-color="#58b8f0"/><stop offset="1" stop-color="#2878c8"/></linearGradient></defs><path d="M4.5 1.5 h7 q1.5 0 1.5 1.5 v8 q0 1-1 1 h-7.5 q-1 0-1-1 v-8 q0-1.5 1-1.5z" fill="url(#mg)" stroke="#88b8e0"/><path d="M4 12 h9 l1 3 h-11z" fill="#c8c0e0" stroke="#a098c0"/></svg>
<div class="t" style="left:56.00px;top:307.74px;font-size:10px;color:#000;font-weight:normal;font-family:'Liberation Sans', sans-serif;">Számítógép</div>
<div class="exp" style="left:22px;top:323px"><div class="mh"></div></div>
<svg style="position:absolute;left:37px;top:319px" width="16" height="16" viewBox="0 0 16 16"><path d="M2 6.5 h9 v3 h-9 z" fill="#8a8a8a" stroke="#202020" stroke-width="1.2"/><circle cx="3" cy="8" r="2.6" fill="#909090" stroke="#202020" stroke-width="1.2"/><path d="M11 4.5 L15.5 8 L11 11.5z" fill="#101010"/><path d="M5 6.5 L8 2.5 H9.5" stroke="#202020" stroke-width="1.4" fill="none"/><circle cx="11" cy="2.5" r="1.8" fill="#d0d0d0" stroke="#202020"/><path d="M6 9.5 L9 13 H10" stroke="#202020" stroke-width="1.4" fill="none"/><rect x="9.5" y="11" width="4" height="4" fill="#c0c0c0" stroke="#101010" stroke-width="1.2"/></svg>
<div class="t" style="left:56.00px;top:322.91px;font-size:10px;color:#000;font-weight:normal;font-family:'Liberation Sans', sans-serif;">USB-vezérlők</div>
<svg style="position:absolute;left:55px;top:335px" width="16" height="16" viewBox="0 0 16 16"><path d="M2 6.5 h9 v3 h-9 z" fill="#8a8a8a" stroke="#202020" stroke-width="1.2"/><circle cx="3" cy="8" r="2.6" fill="#909090" stroke="#202020" stroke-width="1.2"/><path d="M11 4.5 L15.5 8 L11 11.5z" fill="#101010"/><path d="M5 6.5 L8 2.5 H9.5" stroke="#202020" stroke-width="1.4" fill="none"/><circle cx="11" cy="2.5" r="1.8" fill="#d0d0d0" stroke="#202020"/><path d="M6 9.5 L9 13 H10" stroke="#202020" stroke-width="1.4" fill="none"/><rect x="9.5" y="11" width="4" height="4" fill="#c0c0c0" stroke="#101010" stroke-width="1.2"/></svg>
<div class="t" style="left:74.00px;top:338.08px;font-size:10px;color:#000;font-weight:normal;font-family:'Liberation Sans', sans-serif;">Általános USB hub</div>
<svg style="position:absolute;left:55px;top:350px" width="16" height="16" viewBox="0 0 16 16"><path d="M2 6.5 h9 v3 h-9 z" fill="#8a8a8a" stroke="#202020" stroke-width="1.2"/><circle cx="3" cy="8" r="2.6" fill="#909090" stroke="#202020" stroke-width="1.2"/><path d="M11 4.5 L15.5 8 L11 11.5z" fill="#101010"/><path d="M5 6.5 L8 2.5 H9.5" stroke="#202020" stroke-width="1.4" fill="none"/><circle cx="11" cy="2.5" r="1.8" fill="#d0d0d0" stroke="#202020"/><path d="M6 9.5 L9 13 H10" stroke="#202020" stroke-width="1.4" fill="none"/><rect x="9.5" y="11" width="4" height="4" fill="#c0c0c0" stroke="#101010" stroke-width="1.2"/></svg>
<div class="t" style="left:74.00px;top:353.25px;font-size:10px;color:#000;font-weight:normal;font-family:'Liberation Sans', sans-serif;letter-spacing:0.068px">Szabványos bővített PCI-USB állomásvezérlő</div>
<svg style="position:absolute;left:55px;top:365px" width="16" height="16" viewBox="0 0 16 16"><path d="M2 6.5 h9 v3 h-9 z" fill="#8a8a8a" stroke="#202020" stroke-width="1.2"/><circle cx="3" cy="8" r="2.6" fill="#909090" stroke="#202020" stroke-width="1.2"/><path d="M11 4.5 L15.5 8 L11 11.5z" fill="#101010"/><path d="M5 6.5 L8 2.5 H9.5" stroke="#202020" stroke-width="1.4" fill="none"/><circle cx="11" cy="2.5" r="1.8" fill="#d0d0d0" stroke="#202020"/><path d="M6 9.5 L9 13 H10" stroke="#202020" stroke-width="1.4" fill="none"/><rect x="9.5" y="11" width="4" height="4" fill="#c0c0c0" stroke="#101010" stroke-width="1.2"/></svg>
<div class="t" style="left:74.00px;top:368.42px;font-size:10px;color:#000;font-weight:normal;font-family:'Liberation Sans', sans-serif;letter-spacing:-0.061px">Szabványos OpenHCD USB állomásvezérlő</div>
<svg style="position:absolute;left:55px;top:380px" width="16" height="16" viewBox="0 0 16 16"><path d="M2 6.5 h9 v3 h-9 z" fill="#8a8a8a" stroke="#202020" stroke-width="1.2"/><circle cx="3" cy="8" r="2.6" fill="#909090" stroke="#202020" stroke-width="1.2"/><path d="M11 4.5 L15.5 8 L11 11.5z" fill="#101010"/><path d="M5 6.5 L8 2.5 H9.5" stroke="#202020" stroke-width="1.4" fill="none"/><circle cx="11" cy="2.5" r="1.8" fill="#d0d0d0" stroke="#202020"/><path d="M6 9.5 L9 13 H10" stroke="#202020" stroke-width="1.4" fill="none"/><rect x="9.5" y="11" width="4" height="4" fill="#c0c0c0" stroke="#101010" stroke-width="1.2"/></svg>
<div class="t" style="left:74.00px;top:383.59px;font-size:10px;color:#000;font-weight:normal;font-family:'Liberation Sans', sans-serif;">USB gyökérhub</div>
<svg style="position:absolute;left:55px;top:395px" width="16" height="16" viewBox="0 0 16 16"><path d="M2 6.5 h9 v3 h-9 z" fill="#8a8a8a" stroke="#202020" stroke-width="1.2"/><circle cx="3" cy="8" r="2.6" fill="#909090" stroke="#202020" stroke-width="1.2"/><path d="M11 4.5 L15.5 8 L11 11.5z" fill="#101010"/><path d="M5 6.5 L8 2.5 H9.5" stroke="#202020" stroke-width="1.4" fill="none"/><circle cx="11" cy="2.5" r="1.8" fill="#d0d0d0" stroke="#202020"/><path d="M6 9.5 L9 13 H10" stroke="#202020" stroke-width="1.4" fill="none"/><rect x="9.5" y="11" width="4" height="4" fill="#c0c0c0" stroke="#101010" stroke-width="1.2"/></svg>
<div class="t" style="left:74.00px;top:398.76px;font-size:10px;color:#000;font-weight:normal;font-family:'Liberation Sans', sans-serif;">USB gyökérhub</div>
<svg style="position:absolute;left:55px;top:410px" width="16" height="16" viewBox="0 0 16 16"><path d="M2 6.5 h9 v3 h-9 z" fill="#8a8a8a" stroke="#202020" stroke-width="1.2"/><circle cx="3" cy="8" r="2.6" fill="#909090" stroke="#202020" stroke-width="1.2"/><path d="M11 4.5 L15.5 8 L11 11.5z" fill="#101010"/><path d="M5 6.5 L8 2.5 H9.5" stroke="#202020" stroke-width="1.4" fill="none"/><circle cx="11" cy="2.5" r="1.8" fill="#d0d0d0" stroke="#202020"/><path d="M6 9.5 L9 13 H10" stroke="#202020" stroke-width="1.4" fill="none"/><rect x="9.5" y="11" width="4" height="4" fill="#c0c0c0" stroke="#101010" stroke-width="1.2"/></svg>
<div class="t" style="left:74.00px;top:413.93px;font-size:10px;color:#000;font-weight:normal;font-family:'Liberation Sans', sans-serif;letter-spacing:-0.089px">USB kompozit eszköz</div>
<svg style="position:absolute;left:55px;top:426px" width="16" height="16" viewBox="0 0 16 16"><path d="M2 6.5 h9 v3 h-9 z" fill="#8a8a8a" stroke="#202020" stroke-width="1.2"/><circle cx="3" cy="8" r="2.6" fill="#909090" stroke="#202020" stroke-width="1.2"/><path d="M11 4.5 L15.5 8 L11 11.5z" fill="#101010"/><path d="M5 6.5 L8 2.5 H9.5" stroke="#202020" stroke-width="1.4" fill="none"/><circle cx="11" cy="2.5" r="1.8" fill="#d0d0d0" stroke="#202020"/><path d="M6 9.5 L9 13 H10" stroke="#202020" stroke-width="1.4" fill="none"/><rect x="9.5" y="11" width="4" height="4" fill="#c0c0c0" stroke="#101010" stroke-width="1.2"/></svg>
<div class="t" style="left:74.00px;top:429.10px;font-size:10px;color:#000;font-weight:normal;font-family:'Liberation Sans', sans-serif;">USB Serial Converter</div>
<div class="exp" style="left:22px;top:445px"><div class="mh"></div><div class="mv"></div></div>
<svg style="position:absolute;left:37px;top:441px" width="16" height="16" viewBox="0 0 16 16"><defs><linearGradient id="mg" x1="0" y1="0" x2="1" y2="1"><stop offset="0" stop-color="#c8ecfc"/><stop offset="0.5" stop-color="#58b8f0"/><stop offset="1" stop-color="#2878c8"/></linearGradient></defs><path d="M4.5 1.5 h7 q1.5 0 1.5 1.5 v8 q0 1-1 1 h-7.5 q-1 0-1-1 v-8 q0-1.5 1-1.5z" fill="url(#mg)" stroke="#88b8e0"/><path d="M4 12 h9 l1 3 h-11z" fill="#c8c0e0" stroke="#a098c0"/></svg>
<div class="t" style="left:56.00px;top:444.27px;font-size:10px;color:#000;font-weight:normal;font-family:'Liberation Sans', sans-serif;letter-spacing:0.182px">Videokártyák</div>
</div>
<div style="position:absolute;left:491px;top:162px;width:518px;height:477px;background:#a8b888;border-radius:7px 7px 0 0"></div>
<div style="position:absolute;left:491px;top:162px;width:518px;height:28px;border-radius:7px 7px 0 0;box-shadow:inset 1px 0 0 #8c9a70, inset -1px 0 0 #7a8666;background:linear-gradient(#8a9478 0px,#8a9478 1px,#e0e9c2 1px,#d6e0b6 3px,#bccaa0 5px,#aab98a 8px,#a8b888 13px,#b4c48e 18px,#bccb94 25px,#98a680 26px,#8c9878 27px,#8c9878 28px)"></div>
<div style="position:absolute;left:491px;top:190px;width:4px;height:449px;background:linear-gradient(90deg,#8a9872 0px,#a4b48a 1px,#b8c6a0 2px,#dfe6cc 3px,#e9edd8 4px)"></div>
<div style="position:absolute;left:1003px;top:190px;width:6px;height:449px;background:linear-gradient(90deg,#ece9d8 0px,#e8ead8 3px,#b8c0a0 4px,#8a9674 5px,#7a8666 6px)"></div>
<div style="position:absolute;left:491px;top:635px;width:518px;height:4px;background:linear-gradient(#e8ead8 0px,#e4e6d2 1px,#b0b898 2px,#8a9674 3px,#7a8666 4px)"></div>
<div style="position:absolute;left:495px;top:190px;width:508px;height:445px;background:#ece9d8"></div>
<div style="position:absolute;left:495px;top:190px;width:508px;height:1px;background:#e6ead4"></div>
<svg style="position:absolute;left:495px;top:170px" width="16" height="13" viewBox="0 0 16 13"><path d="M0.5 5 L6 1 L12 2.5 L15.5 6.5 L10 10.5 L4 9z" fill="#686870"/><path d="M4 4.5 L8 2.5 L12 5 L9 8z" fill="#a8a8b4"/><path d="M1.5 7.5 l1 1.5 M3.5 9 l1 1.5 M5.5 10 l1 1.5 M7.5 10.5 l1 1.5 M9.5 10.5 l1 1.5 M11.5 9.5 l1 1.5 M14 7.5 l1 1" stroke="#101010" stroke-width="1.4"/></svg>
<div class="t" style="left:514.50px;top:171.63px;font-size:12.6px;color:#f6faee;font-weight:bold;font-family:'Liberation Sans', sans-serif;text-shadow:1px 1px 0 #4e5e38">Avr-Osp II</div>
<div style="position:absolute;left:940px;top:167px;width:20px;height:20px;background:linear-gradient(90deg,#aab894,#8a9a72 50%,#748460);border:1px solid #eef2dc;border-radius:3px;box-sizing:border-box"></div>
<div style="position:absolute;left:963px;top:167px;width:20px;height:20px;background:linear-gradient(90deg,#b0bc98,#98a880 50%,#8a9a74);border:1px solid #eef2dc;border-radius:3px;box-sizing:border-box"></div>
<div style="position:absolute;left:984px;top:167px;width:20px;height:20px;background:linear-gradient(135deg,#e07858,#c85038 55%,#b84030);border:1px solid #eef2dc;border-radius:3px;box-sizing:border-box"></div>
<div style="position:absolute;left:945px;top:179px;width:7px;height:3px;background:#f8f8f0"></div>
<div style="position:absolute;left:967px;top:172px;width:12px;height:11px;border:1px solid #c8d4b0;border-top-width:3px;box-sizing:border-box"></div>
<svg style="position:absolute;left:987px;top:170px" width="14" height="14" viewBox="0 0 14 14"><path d="M3 3 L11 11 M11 3 L3 11" stroke="#fff4ee" stroke-width="1.6"/></svg>
<div style="position:absolute;left:497px;top:211px;width:507px;height:302px;background:#ece9d8;border-top:1px solid #fbfbf8;border-left:1px solid #fbfbf8;border-right:1px solid #9a9888;border-bottom:2px solid #807e70;box-sizing:border-box"></div>
<div style="position:absolute;left:1002px;top:212px;width:1px;height:300px;background:#cac8b8"></div>
<div style="position:absolute;left:548px;top:194px;width:50px;height:17px;background:#efede0;border-top:1px solid #fbfbf8"></div>
<div style="position:absolute;left:598px;top:194px;width:2px;height:17px;background:linear-gradient(90deg,#a8a698,#6c6a60)"></div>
<div class="t" style="left:551.60px;top:199.88px;font-size:10.3px;color:#000;font-weight:normal;font-family:'Liberation Sans', sans-serif;">Fuse Bits</div>
<div style="position:absolute;left:599px;top:194px;width:52px;height:17px;background:#efede0;border-top:1px solid #fbfbf8"></div>
<div style="position:absolute;left:651px;top:194px;width:2px;height:17px;background:linear-gradient(90deg,#a8a698,#6c6a60)"></div>
<div class="t" style="left:603.60px;top:199.88px;font-size:10.3px;color:#000;font-weight:normal;font-family:'Liberation Sans', sans-serif;">Lock Bits</div>
<div style="position:absolute;left:652px;top:194px;width:56px;height:17px;background:#efede0;border-top:1px solid #fbfbf8"></div>
<div style="position:absolute;left:708px;top:194px;width:2px;height:17px;background:linear-gradient(90deg,#a8a698,#6c6a60)"></div>
<div class="t" style="left:658.00px;top:199.88px;font-size:10.3px;color:#000;font-weight:normal;font-family:'Liberation Sans', sans-serif;">Advanced</div>
<div style="position:absolute;left:709px;top:194px;width:54px;height:17px;background:#efede0;border-top:1px solid #fbfbf8"></div>
<div style="position:absolute;left:763px;top:194px;width:2px;height:17px;background:linear-gradient(90deg,#a8a698,#6c6a60)"></div>
<div class="t" style="left:715.60px;top:199.88px;font-size:10.3px;color:#000;font-weight:normal;font-family:'Liberation Sans', sans-serif;">Configure</div>
<div style="position:absolute;left:764px;top:194px;width:39px;height:17px;background:#efede0;border-top:1px solid #fbfbf8"></div>
<div style="position:absolute;left:803px;top:194px;width:2px;height:17px;background:linear-gradient(90deg,#a8a698,#6c6a60)"></div>
<div class="t" style="left:768.60px;top:199.88px;font-size:10.3px;color:#000;font-weight:normal;font-family:'Liberation Sans', sans-serif;">Help</div>
<div style="position:absolute;left:496px;top:192px;width:52px;height:20px;background:#ece9d8;border-top:1px solid #fbfbf8;border-left:1px solid #fbfbf8;box-sizing:border-box"></div>
<div style="position:absolute;left:546px;top:193px;width:2px;height:19px;background:linear-gradient(90deg,#9c9a8c,#6c6a60)"></div>
<div class="t" style="left:504.50px;top:197.68px;font-size:10.3px;color:#000;font-weight:normal;font-family:'Liberation Sans', sans-serif;">Program</div>
<div style="position:absolute;left:511px;top:231px;width:233px;height:117px;border:1px solid #b4b2a0;box-shadow:inset 1px 1px 0 #fbfbf6, 1px 1px 0 #fbfbf6;border-radius:2px;box-sizing:border-box"></div>
<div style="position:absolute;left:518px;top:229px;width:36px;height:5px;background:#ece9d8"></div>
<div class="t" style="left:519.40px;top:228.18px;font-size:10.3px;color:#2a2a9c;font-weight:normal;font-family:'Liberation Sans', sans-serif;">Device</div>
<div style="position:absolute;left:523px;top:244px;width:126px;height:18px;background:#fff;border-top:2px solid #8a887c;border-left:2px solid #8a887c;border-bottom:1px solid #fdfdf8;border-right:1px solid #fdfdf8;box-sizing:border-box"></div>
<div style="position:absolute;left:633px;top:246px;width:15px;height:15px;background:#ece9d8;border-top:1px solid #fff;border-left:1px solid #fff;border-right:1px solid #404040;border-bottom:1px solid #404040;box-sizing:border-box"></div>
<svg style="position:absolute;left:636px;top:251px" width="9" height="5" viewBox="0 0 9 5"><path d="M1 0 H8 L4.5 4z" fill="#000"/></svg>
<div class="t" style="left:527.20px;top:250.08px;font-size:10.3px;color:#000;font-weight:normal;font-family:'Liberation Sans', sans-serif;">No device selected</div>
<div style="position:absolute;left:664px;top:244px;width:68px;height:22px;border:1px solid #3a5a8a;border-radius:3px;box-sizing:border-box;background:linear-gradient(#fcfcfa,#f2f1ea 60%,#e0dfd6);box-shadow:inset 0 0 0 1px #98b8e8, inset 0 0 0 2px #c0d6f4"></div>
<div style="position:absolute;left:667px;top:247px;width:62px;height:16px;border:1px dotted #3a4a6a;box-sizing:border-box"></div>
<div class="t" style="left:664px;top:250.5px;width:68px;text-align:center;font-size:10.3px;font-family:'Liberation Sans', sans-serif">Auto Detect</div>
<div style="position:absolute;left:523px;top:275px;width:210px;height:57px;border-top:1px solid #a4a292;border-left:1px solid #a4a292;border-bottom:1px solid #fbfbf6;border-right:1px solid #fbfbf6;box-sizing:border-box"></div>
<div style="position:absolute;left:757px;top:231px;width:232px;height:117px;border:1px solid #b4b2a0;box-shadow:inset 1px 1px 0 #fbfbf6, 1px 1px 0 #fbfbf6;border-radius:2px;box-sizing:border-box"></div>
<div style="position:absolute;left:762px;top:229px;width:102px;height:5px;background:#ece9d8"></div>
<div class="t" style="left:763.50px;top:227.58px;font-size:10.3px;color:#2a2a9c;font-weight:normal;font-family:'Liberation Sans', sans-serif;">Auto program settings</div>
<div style="position:absolute;left:779px;top:247.5px;width:12px;height:11.5px;background:linear-gradient(135deg,#ecebe2,#fbfbf8 60%,#fff);border-top:1px solid #62625a;border-left:1px solid #62625a;box-shadow:inset 1px 1px 0 #b4b4a8;box-sizing:border-box"></div>
<svg style="position:absolute;left:779px;top:247px" width="12" height="12" viewBox="0 0 12 12"><path d="M2.8 5.6 L5 8 L9.6 3.2" stroke="#111" stroke-width="1.9" fill="none"/></svg>
<div class="t" style="left:795.80px;top:249.53px;font-size:10px;color:#000;font-weight:normal;font-family:'Liberation Sans', sans-serif;">Erase device before programming</div>
<div style="position:absolute;left:779px;top:267.5px;width:12px;height:11.5px;background:linear-gradient(135deg,#ecebe2,#fbfbf8 60%,#fff);border-top:1px solid #62625a;border-left:1px solid #62625a;box-shadow:inset 1px 1px 0 #b4b4a8;box-sizing:border-box"></div>
<svg style="position:absolute;left:779px;top:267px" width="12" height="12" viewBox="0 0 12 12"><path d="M2.8 5.6 L5 8 L9.6 3.2" stroke="#111" stroke-width="1.9" fill="none"/></svg>
<div class="t" style="left:796.00px;top:269.64px;font-size:10px;color:#000;font-weight:normal;font-family:'Liberation Sans', sans-serif;letter-spacing:0.03px">Verify device after programming</div>
<div style="position:absolute;left:779px;top:289.5px;width:12px;height:11.5px;background:linear-gradient(135deg,#ecebe2,#fbfbf8 60%,#fff);border-top:1px solid #62625a;border-left:1px solid #62625a;box-shadow:inset 1px 1px 0 #b4b4a8;box-sizing:border-box"></div>
<div class="t" style="left:796.00px;top:290.54px;font-size:10px;color:#000;font-weight:normal;font-family:'Liberation Sans', sans-serif;">Send Exit after programming</div>
<div style="position:absolute;left:765px;top:318px;width:74px;height:21px;border:1px solid #44566a;border-radius:3px;box-sizing:border-box;background:linear-gradient(#fcfcfa,#f2f1ea 60%,#e0dfd6)"></div>
<div class="t" style="left:765px;top:324.0px;width:74px;text-align:center;font-size:10.3px;font-family:'Liberation Sans', sans-serif">Erase Device</div>
<div style="position:absolute;left:846px;top:318px;width:55px;height:21px;border:1px solid #44566a;border-radius:3px;box-sizing:border-box;background:linear-gradient(#fcfcfa,#f2f1ea 60%,#e0dfd6)"></div>
<div class="t" style="left:846px;top:324.0px;width:55px;text-align:center;font-size:10.3px;font-family:'Liberation Sans', sans-serif">Auto</div>
<div style="position:absolute;left:907px;top:318px;width:74px;height:21px;border:1px solid #44566a;border-radius:3px;box-sizing:border-box;background:linear-gradient(#fcfcfa,#f2f1ea 60%,#e0dfd6)"></div>
<div class="t" style="left:907px;top:324.0px;width:74px;text-align:center;font-size:10.3px;font-family:'Liberation Sans', sans-serif">Send Exit</div>
<div style="position:absolute;left:511px;top:360px;width:233px;height:73px;border:1px solid #b4b2a0;box-shadow:inset 1px 1px 0 #fbfbf6, 1px 1px 0 #fbfbf6;border-radius:2px;box-sizing:border-box"></div>
<div style="position:absolute;left:518px;top:358px;width:36px;height:5px;background:#ece9d8"></div>
<div class="t" style="left:519.30px;top:357.08px;font-size:10.3px;color:#2a2a9c;font-weight:normal;font-family:'Liberation Sans', sans-serif;">FLASH</div>
<div style="position:absolute;left:524px;top:374px;width:151px;height:17px;background:#fff;border-top:2px solid #8a887c;border-left:2px solid #8a887c;border-bottom:1px solid #fdfdf8;border-right:1px solid #fdfdf8;box-sizing:border-box"></div>
<div style="position:absolute;left:683px;top:372px;width:50px;height:21px;border:1px solid #44566a;border-radius:3px;box-sizing:border-box;background:linear-gradient(#fcfcfa,#f2f1ea 60%,#e0dfd6)"></div>
<div class="t" style="left:683px;top:378.0px;width:50px;text-align:center;font-size:10.3px;font-family:'Liberation Sans', sans-serif">Browse</div>
<div style="position:absolute;left:531px;top:404px;width:57px;height:21px;border:1px solid #44566a;border-radius:3px;box-sizing:border-box;background:linear-gradient(#fcfcfa,#f2f1ea 60%,#e0dfd6)"></div>
<div class="t" style="left:531px;top:410.0px;width:57px;text-align:center;font-size:10.3px;font-family:'Liberation Sans', sans-serif">Program</div>
<div style="position:absolute;left:600px;top:404px;width:57px;height:21px;border:1px solid #44566a;border-radius:3px;box-sizing:border-box;background:linear-gradient(#fcfcfa,#f2f1ea 60%,#e0dfd6)"></div>
<div class="t" style="left:600px;top:410.0px;width:57px;text-align:center;font-size:10.3px;font-family:'Liberation Sans', sans-serif">Verify</div>
<div style="position:absolute;left:668px;top:404px;width:57px;height:21px;border:1px solid #44566a;border-radius:3px;box-sizing:border-box;background:linear-gradient(#fcfcfa,#f2f1ea 60%,#e0dfd6)"></div>
<div class="t" style="left:668px;top:410.0px;width:57px;text-align:center;font-size:10.3px;font-family:'Liberation Sans', sans-serif">Read</div>
<div style="position:absolute;left:757px;top:361px;width:232px;height:72px;border:1px solid #b4b2a0;box-shadow:inset 1px 1px 0 #fbfbf6, 1px 1px 0 #fbfbf6;border-radius:2px;box-sizing:border-box"></div>
<div style="position:absolute;left:763px;top:359px;width:42px;height:5px;background:#ece9d8"></div>
<div class="t" style="left:764.50px;top:357.28px;font-size:10.3px;color:#2a2a9c;font-weight:normal;font-family:'Liberation Sans', sans-serif;">EEPROM</div>
<div style="position:absolute;left:768px;top:374px;width:153px;height:18px;background:#fff;border-top:2px solid #8a887c;border-left:2px solid #8a887c;border-bottom:1px solid #fdfdf8;border-right:1px solid #fdfdf8;box-sizing:border-box"></div>
<div style="position:absolute;left:928px;top:372px;width:49px;height:21px;border:1px solid #44566a;border-radius:3px;box-sizing:border-box;background:linear-gradient(#fcfcfa,#f2f1ea 60%,#e0dfd6)"></div>
<div class="t" style="left:928px;top:378.0px;width:49px;text-align:center;font-size:10.3px;font-family:'Liberation Sans', sans-serif">Browse</div>
<div style="position:absolute;left:776px;top:404px;width:57px;height:21px;border:1px solid #44566a;border-radius:3px;box-sizing:border-box;background:linear-gradient(#fcfcfa,#f2f1ea 60%,#e0dfd6)"></div>
<div class="t" style="left:776px;top:410.0px;width:57px;text-align:center;font-size:10.3px;font-family:'Liberation Sans', sans-serif">Program</div>
<div style="position:absolute;left:844px;top:404px;width:58px;height:21px;border:1px solid #44566a;border-radius:3px;box-sizing:border-box;background:linear-gradient(#fcfcfa,#f2f1ea 60%,#e0dfd6)"></div>
<div class="t" style="left:844px;top:410.0px;width:58px;text-align:center;font-size:10.3px;font-family:'Liberation Sans', sans-serif">Verify</div>
<div style="position:absolute;left:913px;top:404px;width:57px;height:21px;border:1px solid #44566a;border-radius:3px;box-sizing:border-box;background:linear-gradient(#fcfcfa,#f2f1ea 60%,#e0dfd6)"></div>
<div class="t" style="left:913px;top:410.0px;width:57px;text-align:center;font-size:10.3px;font-family:'Liberation Sans', sans-serif">Read</div>
<div style="position:absolute;left:511px;top:447px;width:233px;height:55px;border:1px solid #b4b2a0;box-shadow:inset 1px 1px 0 #fbfbf6, 1px 1px 0 #fbfbf6;border-radius:2px;box-sizing:border-box"></div>
<div style="position:absolute;left:518px;top:445px;width:66px;height:5px;background:#ece9d8"></div>
<div class="t" style="left:519.10px;top:443.38px;font-size:10.3px;color:#2a2a9c;font-weight:normal;font-family:'Liberation Sans', sans-serif;">FLASH Range</div>
<div class="t" style="left:608.60px;top:455.78px;font-size:10.3px;color:#000;font-weight:normal;font-family:'Liberation Sans', sans-serif;">Start:</div>
<div class="t" style="left:677.20px;top:455.78px;font-size:10.3px;color:#000;font-weight:normal;font-family:'Liberation Sans', sans-serif;">End:</div>
<div style="position:absolute;left:523px;top:473.5px;width:12px;height:11.5px;background:linear-gradient(135deg,#ecebe2,#fbfbf8 60%,#fff);border-top:1px solid #62625a;border-left:1px solid #62625a;box-shadow:inset 1px 1px 0 #b4b4a8;box-sizing:border-box"></div>
<div class="t" style="left:540.10px;top:476.08px;font-size:10.3px;color:#000;font-weight:normal;font-family:'Liberation Sans', sans-serif;">Use range</div>
<div style="position:absolute;left:603px;top:472px;width:53px;height:17px;background:#fff;border-top:2px solid #8a887c;border-left:2px solid #8a887c;border-bottom:1px solid #fdfdf8;border-right:1px solid #fdfdf8;box-sizing:border-box"></div>
<div class="t" style="left:606.00px;top:478.17px;font-size:10.2px;color:#000;font-weight:normal;font-family:'Liberation Sans', sans-serif;letter-spacing:-0.2px">0x00</div>
<div style="position:absolute;left:671px;top:472px;width:53px;height:17px;background:#fff;border-top:2px solid #8a887c;border-left:2px solid #8a887c;border-bottom:1px solid #fdfdf8;border-right:1px solid #fdfdf8;box-sizing:border-box"></div>
<div class="t" style="left:674.00px;top:478.17px;font-size:10.2px;color:#000;font-weight:normal;font-family:'Liberation Sans', sans-serif;letter-spacing:-0.2px">0x00</div>
<div style="position:absolute;left:757px;top:447px;width:232px;height:55px;border:1px solid #b4b2a0;box-shadow:inset 1px 1px 0 #fbfbf6, 1px 1px 0 #fbfbf6;border-radius:2px;box-sizing:border-box"></div>
<div style="position:absolute;left:763px;top:445px;width:72px;height:5px;background:#ece9d8"></div>
<div class="t" style="left:764.00px;top:443.28px;font-size:10.3px;color:#2a2a9c;font-weight:normal;font-family:'Liberation Sans', sans-serif;">EEPROM Range</div>
<div class="t" style="left:853.60px;top:455.78px;font-size:10.3px;color:#000;font-weight:normal;font-family:'Liberation Sans', sans-serif;">Start:</div>
<div class="t" style="left:921.90px;top:455.78px;font-size:10.3px;color:#000;font-weight:normal;font-family:'Liberation Sans', sans-serif;">End:</div>
<div style="position:absolute;left:768px;top:473.5px;width:12px;height:11.5px;background:linear-gradient(135deg,#ecebe2,#fbfbf8 60%,#fff);border-top:1px solid #62625a;border-left:1px solid #62625a;box-shadow:inset 1px 1px 0 #b4b4a8;box-sizing:border-box"></div>
<div class="t" style="left:785.00px;top:476.08px;font-size:10.3px;color:#000;font-weight:normal;font-family:'Liberation Sans', sans-serif;">Use range</div>
<div style="position:absolute;left:848px;top:472px;width:54px;height:17px;background:#fff;border-top:2px solid #8a887c;border-left:2px solid #8a887c;border-bottom:1px solid #fdfdf8;border-right:1px solid #fdfdf8;box-sizing:border-box"></div>
<div class="t" style="left:851.50px;top:478.17px;font-size:10.2px;color:#000;font-weight:normal;font-family:'Liberation Sans', sans-serif;letter-spacing:-0.2px">0x00</div>
<div style="position:absolute;left:916px;top:472px;width:53px;height:17px;background:#fff;border-top:2px solid #8a887c;border-left:2px solid #8a887c;border-bottom:1px solid #fdfdf8;border-right:1px solid #fdfdf8;box-sizing:border-box"></div>
<div class="t" style="left:919.50px;top:478.17px;font-size:10.2px;color:#000;font-weight:normal;font-family:'Liberation Sans', sans-serif;letter-spacing:-0.2px">0x00</div>
<div style="position:absolute;left:497px;top:518px;width:506px;height:13px;border-top:1px solid #aca899;border-left:1px solid #aca899;border-bottom:1px solid #fbfbf6;border-right:1px solid #fbfbf6;box-sizing:border-box;background:#e9e6d5"></div>
<div style="position:absolute;left:496px;top:536px;width:18px;height:42px;border:1px solid #4a5c70;border-radius:3px;box-sizing:border-box;background:linear-gradient(90deg,#e4e8e8,#f8f8f4 50%,#dcdcd4)"></div>
<div class="t" style="left:496px;top:537.3px;width:18px;text-align:center;font-size:12px;color:#222;font-family:'Liberation Sans', sans-serif">C</div>
<div class="t" style="left:496px;top:550.8px;width:18px;text-align:center;font-size:12px;color:#222;font-family:'Liberation Sans', sans-serif">L</div>
<div class="t" style="left:496px;top:564.0px;width:18px;text-align:center;font-size:12px;color:#222;font-family:'Liberation Sans', sans-serif">R</div>
<div style="position:absolute;left:496px;top:585px;width:18px;height:43px;border:1px solid #4a5c70;border-radius:3px;box-sizing:border-box;background:linear-gradient(90deg,#e4e8e8,#f8f8f4 50%,#dcdcd4)"></div>
<div class="t" style="left:496px;top:587.6px;width:18px;text-align:center;font-size:12px;color:#222;font-family:'Liberation Sans', sans-serif">C</div>
<div class="t" style="left:496px;top:600.4px;width:18px;text-align:center;font-size:12px;color:#222;font-family:'Liberation Sans', sans-serif">P</div>
<div class="t" style="left:496px;top:613.8px;width:18px;text-align:center;font-size:12px;color:#222;font-family:'Liberation Sans', sans-serif">Y</div>
<div style="position:absolute;left:517px;top:535px;width:482px;height:94px;background:#fff;border-top:2px solid #a09e90;border-left:2px solid #8a887c;border-bottom:1px solid #fff;border-right:1px solid #fff;box-sizing:border-box"></div>
<div class="t" style="left:521.20px;top:538.97px;font-size:11px;color:#000;font-weight:normal;font-family:'Liberation Mono', monospace;-webkit-text-stroke:0.35px #111">Entering programming mode failed!</div>
<div class="t" style="left:521.20px;top:552.37px;font-size:11px;color:#000;font-weight:normal;font-family:'Liberation Mono', monospace;-webkit-text-stroke:0.35px #111">Programmer did not return CR after &#x27;P&#x27;-command.</div>
<div class="t" style="left:521.20px;top:565.17px;font-size:11px;color:#000;font-weight:normal;font-family:'Liberation Mono', monospace;-webkit-text-stroke:0.35px #111">Signature = 0x0D 0x0D 0x3F</div>
<div class="t" style="left:521.20px;top:578.57px;font-size:11px;color:#000;font-weight:normal;font-family:'Liberation Mono', monospace;-webkit-text-stroke:0.35px #111">Leaving programming mode...</div>
<div class="t" style="left:521.20px;top:591.77px;font-size:11px;color:#000;font-weight:normal;font-family:'Liberation Mono', monospace;-webkit-text-stroke:0.35px #111">Leaving programming mode failed!</div>
<div class="t" style="left:521.20px;top:605.17px;font-size:11px;color:#000;font-weight:normal;font-family:'Liberation Mono', monospace;-webkit-text-stroke:0.35px #111">Programmer did not return CR after &#x27;L&#x27;-command.</div>
<div style="position:absolute;left:983px;top:537px;width:15px;height:90px;background:linear-gradient(90deg,#f0f0e8,#fbfbf6)"></div>
<div style="position:absolute;left:984px;top:538px;width:14px;height:14px;background:linear-gradient(135deg,#c8d4b0,#a0b088);border:1px solid #e4ead8;border-radius:2px;box-sizing:border-box"></div>
<div style="position:absolute;left:984px;top:612px;width:14px;height:15px;background:linear-gradient(135deg,#c8d4b0,#a0b088);border:1px solid #e4ead8;border-radius:2px;box-sizing:border-box"></div>
<svg style="position:absolute;left:986px;top:541px" width="10" height="8" viewBox="0 0 10 8"><path d="M1.5 6 L5 2.5 L8.5 6" stroke="#fff" stroke-width="1.6" fill="none"/></svg>
<svg style="position:absolute;left:986px;top:616px" width="10" height="8" viewBox="0 0 10 8"><path d="M1.5 2 L5 5.5 L8.5 2" stroke="#fff" stroke-width="1.6" fill="none"/></svg>
<div style="position:absolute;left:984px;top:580px;width:14px;height:29px;background:linear-gradient(90deg,#b8c8a0,#a8b890);border:1px solid #e4ead8;border-radius:2px;box-sizing:border-box"></div>
<div style="position:absolute;left:988px;top:590px;width:6px;height:1px;background:#d8e4c8"></div>
<div style="position:absolute;left:988px;top:593px;width:6px;height:1px;background:#d8e4c8"></div>
<div style="position:absolute;left:988px;top:596px;width:6px;height:1px;background:#d8e4c8"></div>
</body></html>
